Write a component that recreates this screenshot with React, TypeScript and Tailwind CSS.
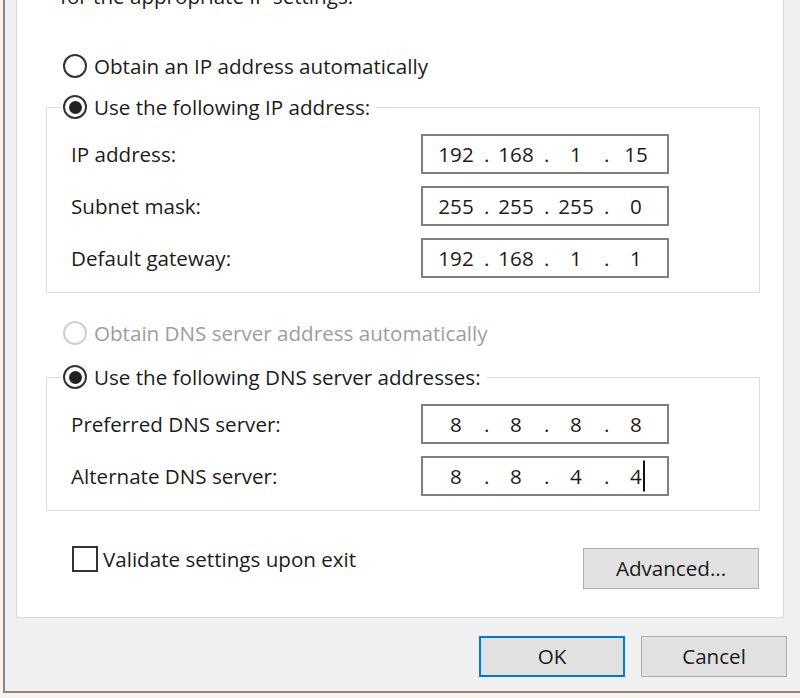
import { Fragment } from 'react';

function Radio({ checked, disabled }: { checked?: boolean; disabled?: boolean }) {
  return (
    <span
      className={`flex h-[24px] w-[24px] shrink-0 items-center justify-center rounded-full border-2 bg-white ${
        disabled ? 'border-[#cfcfcf]' : 'border-[#333333]'
      }`}
    >
      {checked && <span className="h-[13px] w-[13px] rounded-full bg-[#222222]" />}
    </span>
  );
}

function IpField({ parts, caret }: { parts: string[]; caret?: boolean }) {
  return (
    <div className="flex h-[40px] w-[248px] shrink-0 items-center border-2 border-[#7f7f7f] bg-white pl-[5px]">
      {parts.map((p, i) => (
        <Fragment key={i}>
          {i > 0 && <span className="w-[4px] text-center">.</span>}
          <span className="w-[56px] text-center">
            <span className="relative">
              {p}
              {caret && i === 3 && (
                <span className="absolute left-full top-1/2 ml-[1px] h-[31px] w-[2px] -translate-y-1/2 bg-[#111111]" />
              )}
            </span>
          </span>
        </Fragment>
      ))}
    </div>
  );
}

function FieldRow({ label, parts, caret }: { label: string; parts: string[]; caret?: boolean }) {
  return (
    <div className="flex items-center pl-[24px]">
      <span className="w-[350px]">{label}</span>
      <IpField parts={parts} caret={caret} />
    </div>
  );
}

function GroupBox({ legend, children }: { legend: string; children: React.ReactNode }) {
  return (
    <div className="flex flex-col border border-[#dcdcdc] pb-[14px]">
      <div className="-mt-[14px] ml-[15px] flex h-[26px] items-center gap-[7px] self-start bg-white pl-[1px] pr-[6px]">
        <Radio checked />
        <span>{legend}</span>
      </div>
      <div className="mt-[14px] flex flex-col gap-[12px]">{children}</div>
    </div>
  );
}

export default function App() {
  return (
    <div className="h-[698px] w-[800px] overflow-hidden bg-[#f8f3ec] pl-[3px] font-['Open_Sans',sans-serif] text-[20.6px] text-[#1b1b1b]">
      <div className="flex h-[693px] flex-col border-b-2 border-l-2 border-[#8e877d] bg-[#f0f0f0] pl-[11px]">
        {/* Tab page */}
        <div className="flex w-[768px] flex-col border-x border-b border-[#d9d9d9] bg-white pb-[28px] pl-[29px]">
          <div className="-mt-[14px] pl-[14px] leading-[20px]">for the appropriate IP settings.</div>

          <div className="flex w-[714px] flex-col">
            <div className="mt-[47px] flex h-[26px] items-center gap-[7px] pl-[17px]">
              <Radio />
              <span>Obtain an IP address automatically</span>
            </div>

            <div className="mt-[28px]">
              <GroupBox legend="Use the following IP address:">
                <FieldRow label="IP address:" parts={['192', '168', '1', '15']} />
                <FieldRow label="Subnet mask:" parts={['255', '255', '255', '0']} />
                <FieldRow label="Default gateway:" parts={['192', '168', '1', '1']} />
              </GroupBox>
            </div>

            <div className="mt-[27px] flex h-[26px] items-center gap-[7px] pl-[17px] text-[#9d9d9d]">
              <Radio disabled />
              <span>Obtain DNS server address automatically</span>
            </div>

            <div className="mt-[31px]">
              <GroupBox legend="Use the following DNS server addresses:">
                <FieldRow label="Preferred DNS server:" parts={['8', '8', '8', '8']} />
                <FieldRow label="Alternate DNS server:" parts={['8', '8', '4', '4']} caret />
              </GroupBox>
            </div>

            <div className="mt-[35px] flex items-start justify-between pl-[26px] pr-[1px]">
              <label className="flex h-[26px] items-center gap-[5px]">
                <span className="h-[26px] w-[26px] shrink-0 border-2 border-[#333333] bg-white" />
                <span>Validate settings upon exit</span>
              </label>
              <button className="mt-[2px] h-[41px] w-[176px] border border-[#adadad] bg-[#e1e1e1] text-[#1b1b1b]">
                Advanced...
              </button>
            </div>
          </div>
        </div>

        {/* Dialog buttons */}
        <div className="mt-[18px] flex justify-end gap-[16px] pr-[13px]">
          <button className="h-[41px] w-[146px] border-2 border-[#0078d7] bg-[#e1e1e1] text-[#1b1b1b]">OK</button>
          <button className="h-[41px] w-[146px] border border-[#adadad] bg-[#e1e1e1] text-[#1b1b1b]">Cancel</button>
        </div>
      </div>
    </div>
  );
}
